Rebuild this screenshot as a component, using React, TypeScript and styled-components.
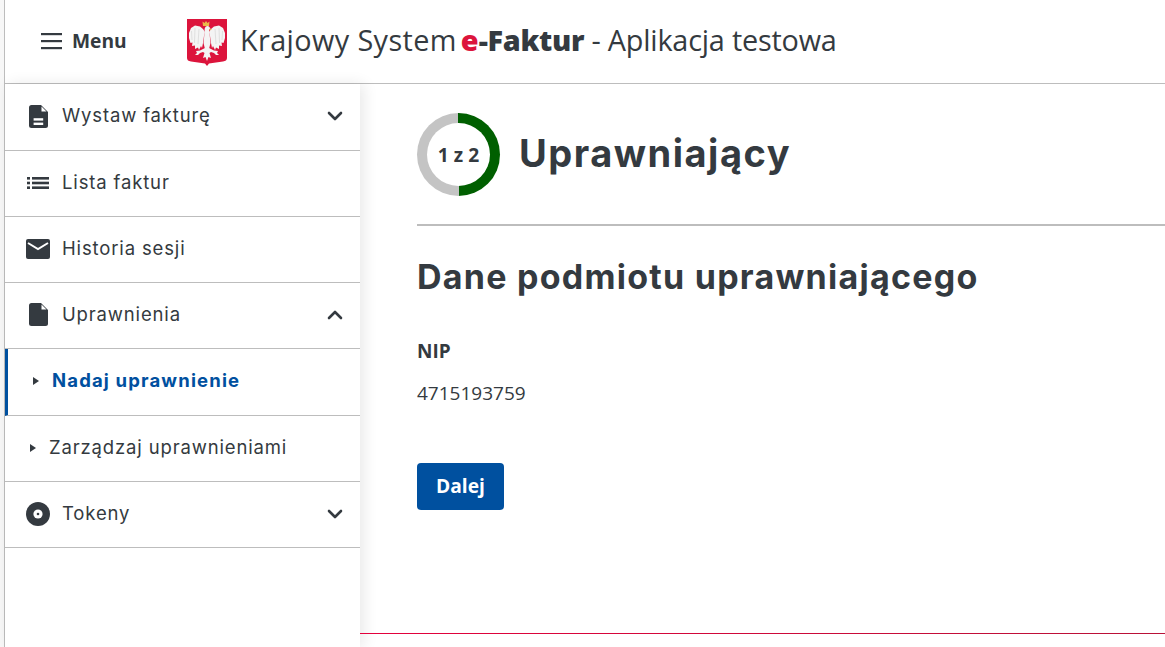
import styled, { createGlobalStyle } from 'styled-components';
import { ChevronDown, ChevronUp } from 'lucide-react';
import type { ReactNode } from 'react';

const GlobalStyle = createGlobalStyle`
  html, body {
    margin: 0;
    padding: 0;
    height: 100%;
    background: #fff;
    overflow: hidden;
  }
  * { box-sizing: border-box; }
`;

const Page = styled.div`
  width: 1165px;
  height: 647px;
  padding-left: 4px;
  overflow: hidden;
  background: #f7f7f7;
  color: #343a40;
  font-family: 'Open Sans', sans-serif;
`;

const Frame = styled.div`
  height: 100%;
  background: #fff;
  border-left: 1px solid #bdbdbd;
  display: flex;
  flex-direction: column;
`;

const Header = styled.header`
  height: 84px;
  flex: none;
  display: flex;
  align-items: center;
  border-bottom: 1px solid #bdbdbd;
`;

const MenuButton = styled.div`
  width: 182px;
  padding-left: 36px;
  padding-bottom: 2px;
  display: flex;
  align-items: center;
  gap: 9px;
  font-size: 19.2px;
  font-weight: 700;
`;

const Brand = styled.div`
  display: flex;
  align-items: center;
  gap: 13px;
  font-size: 28.8px;
  line-height: 36px;
`;

const BrandEmblem = styled.span`
  display: flex;
  margin-top: 2px;
`;

const BrandText = styled.span`
  margin-bottom: 3px;
  display: flex;
  white-space: pre;
`;

const BrandSystem = styled.span`
  letter-spacing: 0.4px;
`;

const BrandE = styled.b`
  color: #dc143c;
  font-weight: 800;
  margin-left: 4px;
`;

const BrandName = styled.b`
  font-weight: 800;
  letter-spacing: -0.3px;
`;

const BrandSuffix = styled.span`
  letter-spacing: -0.2px;
`;

const Body = styled.div`
  flex: 1;
  display: flex;
  min-height: 0;
`;

const Sidebar = styled.nav`
  width: 355px;
  flex: none;
  background: #fff;
  box-shadow: 4px 0 14px rgba(0, 0, 0, 0.09);
  position: relative;
  z-index: 1;
`;

const Row = styled.div<{ $height: number; $active?: boolean }>`
  height: ${p => p.$height}px;
  padding-bottom: 2px;
  display: flex;
  align-items: center;
  border-bottom: 1px solid #bdbdbd;
  border-left: ${p => (p.$active ? '3px solid #00509f' : 'none')};
  font-family: Inter, sans-serif;
  font-size: 18.5px;
  letter-spacing: 0.85px;
`;

const IconSlot = styled.span`
  width: 57px;
  padding-left: 21px;
  flex: none;
  display: flex;
  align-items: center;
`;

const IconBox = styled.span`
  width: 24px;
  display: flex;
  justify-content: center;
`;

const RowLabel = styled.span`
  flex: 1;
  margin-bottom: 2px;
`;

const RowChevron = styled.span`
  display: flex;
  margin-right: 13px;
`;

const SubMarker = styled.span<{ $left: number }>`
  width: 0;
  height: 0;
  margin-left: ${p => p.$left}px;
  margin-right: 13px;
  border-left: 6px solid #343a40;
  border-top: 4px solid transparent;
  border-bottom: 4px solid transparent;
`;

const ActiveLabel = styled.span`
  margin-bottom: 2px;
  color: #00509f;
  font-weight: 700;
  letter-spacing: 1.15px;
`;

const Main = styled.main`
  flex: 1;
  min-width: 0;
  position: relative;
  z-index: 2;
  display: flex;
  flex-direction: column;
`;

const Content = styled.div`
  height: 550px;
  flex: none;
  padding-left: 57px;
  border-bottom: 1px solid;
  border-image: linear-gradient(90deg, #e4003c, #b81238) 1;
`;

const StepHeader = styled.div`
  height: 142px;
  display: flex;
  align-items: center;
  gap: 19px;
  border-bottom: 2px solid #bdbdbd;
`;

const StepRing = styled.div`
  width: 83px;
  height: 83px;
  flex: none;
  border-radius: 50%;
  background: conic-gradient(#005f00 0 50%, #c4c4c4 50% 100%);
  display: flex;
  align-items: center;
  justify-content: center;
`;

const StepInner = styled.div`
  width: 63px;
  height: 63px;
  border-radius: 50%;
  background: #fff;
  display: flex;
  align-items: center;
  justify-content: center;
  font-size: 19.2px;
  font-weight: 700;
`;

const StepTitle = styled.h1`
  margin: 0 0 2px;
  font-family: Inter, sans-serif;
  font-size: 38px;
  letter-spacing: 1.5px;
  font-weight: 700;
`;

const SectionTitle = styled.h2`
  margin: 29px 0 0;
  font-family: Inter, sans-serif;
  font-size: 34px;
  letter-spacing: 1.25px;
  line-height: 44px;
  font-weight: 700;
`;

const FieldLabel = styled.div`
  margin-top: 40px;
  font-size: 19px;
  line-height: 24px;
  font-weight: 700;
`;

const FieldValue = styled.div`
  margin-top: 18px;
  font-size: 19px;
  line-height: 24px;
`;

const NextButton = styled.button`
  display: block;
  margin-top: 58px;
  width: 87px;
  height: 47px;
  padding: 0 0 2px;
  border: none;
  border-radius: 4px;
  background: #00509f;
  color: #fff;
  font-family: 'Open Sans', sans-serif;
  font-size: 19.2px;
  font-weight: 700;
`;

const MenuIcon = () => (
  <svg width="22" height="22" viewBox="0 0 22 22" fill="#343a40">
    <rect x="0" y="3" width="21" height="2.2" />
    <rect x="0" y="10" width="21" height="2.2" />
    <rect x="0" y="17" width="21" height="2.2" />
  </svg>
);

// right half of the eagle, mirrored for the left one
const eagleHalf = (
  <>
    <path
      d="M22 13L24 10L27 7.5L32 6.5L36 9L38 14L38 19L36.5 24L34.5 23.5L35 27L32 26.5L32 30L29 28.5L28 31L26 27L25 29L24 24L23 17Z"
      fill="#f4f4f4"
    />
    <path d="M28 10L29 25M32 9L32.5 24M35.5 12L35 21" stroke="#d9d9d9" strokeWidth="0.8" fill="none" />
    <path d="M20 13Q21.5 13 22.5 14L23.5 24L22 30L20 30Z" fill="#f4f4f4" />
    <path d="M20 29H22L27 31.5L31 32L30 34L32 36L29 36L27 34L24 33L22.5 34L24 39L21.5 38L20 42Z" fill="#f4f4f4" />
  </>
);

const Emblem = () => (
  <svg width="40" height="47" viewBox="0 0 40 47">
    <path d="M0 0H40V39Q40 42 36 42.5L22 44.5L20 47L18 44.5L4 42.5Q0 42 0 39Z" fill="#dc143c" />
    <path d="M16 7L15.5 2.5L17.5 4L19 2L20.5 4L22.5 2.5L22 7Z" fill="#eab84a" />
    <g>{eagleHalf}</g>
    <g transform="matrix(-1 0 0 1 40 0)">{eagleHalf}</g>
    <path d="M18 14C17 10 18 7 20.5 7C22 7 23 8.5 23.5 10L22 10.5L22.5 14Z" fill="#f4f4f4" />
    <path d="M22.5 9.5L25 10.5L22.5 11.5Z" fill="#eab84a" />
  </svg>
);

const DocTextIcon = () => (
  <svg width="19" height="23" viewBox="0 0 19 23" fill="#343a40">
    <path d="M2.5 0H12L19 7V20.5Q19 23 16.5 23H2.5Q0 23 0 20.5V2.5Q0 0 2.5 0Z" />
    <path d="M12.5 1.5L17.5 6.5H12.5Z" fill="#fff" />
    <rect x="4.6" y="13.2" width="9.6" height="2.4" fill="#fff" />
    <rect x="4.6" y="17.6" width="9.6" height="2.4" fill="#fff" />
  </svg>
);

const ListIcon = () => (
  <svg width="22" height="14" viewBox="0 0 22 14" fill="#343a40">
    <rect x="0" y="1" width="3" height="2.6" />
    <rect x="5" y="1" width="17" height="2.6" />
    <rect x="0" y="5.7" width="3" height="2.6" />
    <rect x="5" y="5.7" width="17" height="2.6" />
    <rect x="0" y="10.4" width="3" height="2.6" />
    <rect x="5" y="10.4" width="17" height="2.6" />
  </svg>
);

const MailIcon = () => (
  <svg width="24" height="20" viewBox="0 0 24 20" fill="#343a40">
    <rect width="24" height="20" rx="2" />
    <path d="M2 4L12 10L22 4" fill="none" stroke="#fff" strokeWidth="2" />
  </svg>
);

const DocIcon = () => (
  <svg width="19" height="23" viewBox="0 0 19 23" fill="#343a40">
    <path d="M2.5 0H12L19 7V20.5Q19 23 16.5 23H2.5Q0 23 0 20.5V2.5Q0 0 2.5 0Z" />
    <path d="M12.5 1.5L17.5 6.5H12.5Z" fill="#fff" />
  </svg>
);

const DiscIcon = () => (
  <svg width="24" height="24" viewBox="0 0 24 24">
    <circle cx="12" cy="12" r="12" fill="#343a40" />
    <circle cx="12" cy="12" r="4.6" fill="#fff" />
    <circle cx="12" cy="12" r="1.3" fill="#343a40" />
  </svg>
);

const MenuRow = ({ icon, label, chevron, height }: { icon: ReactNode; label: string; chevron?: 'up' | 'down'; height: number }) => (
  <Row $height={height}>
    <IconSlot>
      <IconBox>{icon}</IconBox>
    </IconSlot>
    <RowLabel>{label}</RowLabel>
    {chevron && (
      <RowChevron>
        {chevron === 'up' ? <ChevronUp size={24} strokeWidth={2.6} /> : <ChevronDown size={24} strokeWidth={2.6} />}
      </RowChevron>
    )}
  </Row>
);

export default function App() {
  return (
    <Page>
      <GlobalStyle />
      <Frame>
        <Header>
          <MenuButton>
            <MenuIcon />
            Menu
          </MenuButton>
          <Brand>
            <BrandEmblem>
              <Emblem />
            </BrandEmblem>
            <BrandText>
              <BrandSystem>Krajowy System</BrandSystem>
              <BrandE>e</BrandE>
              <BrandName>-Faktur</BrandName>
              <BrandSuffix> - Aplikacja testowa</BrandSuffix>
            </BrandText>
          </Brand>
        </Header>
        <Body>
          <Sidebar>
            <MenuRow icon={<DocTextIcon />} label="Wystaw fakturę" chevron="down" height={67} />
            <MenuRow icon={<ListIcon />} label="Lista faktur" height={66} />
            <MenuRow icon={<MailIcon />} label="Historia sesji" height={66} />
            <MenuRow icon={<DocIcon />} label="Uprawnienia" chevron="up" height={66} />
            <Row $height={67} $active>
              <SubMarker $left={25} />
              <ActiveLabel>Nadaj uprawnienie</ActiveLabel>
            </Row>
            <Row $height={66}>
              <SubMarker $left={25} />
              <RowLabel>Zarządzaj uprawnieniami</RowLabel>
            </Row>
            <MenuRow icon={<DiscIcon />} label="Tokeny" chevron="down" height={66} />
          </Sidebar>
          <Main>
            <Content>
              <StepHeader>
                <StepRing>
                  <StepInner>1 z 2</StepInner>
                </StepRing>
                <StepTitle>Uprawniający</StepTitle>
              </StepHeader>
              <SectionTitle>Dane podmiotu uprawniającego</SectionTitle>
              <FieldLabel>NIP</FieldLabel>
              <FieldValue>4715193759</FieldValue>
              <NextButton>Dalej</NextButton>
            </Content>
          </Main>
        </Body>
      </Frame>
    </Page>
  );
}
